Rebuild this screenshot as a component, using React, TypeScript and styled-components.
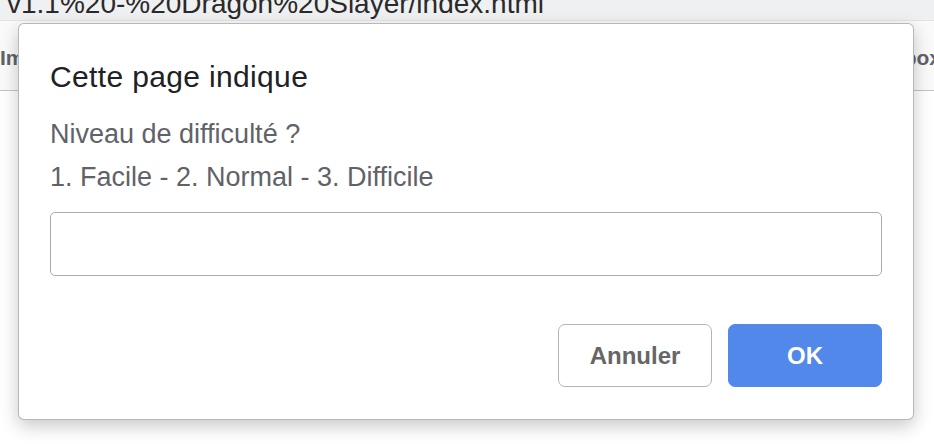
import React from 'react';
import styled, { createGlobalStyle } from 'styled-components';

const GlobalStyle = createGlobalStyle`
	html, body {
		margin: 0;
		padding: 0;
		background: #fff;
	}
	body {
		font-family: 'Liberation Sans', Arial, sans-serif;
	}
`;

const Page = styled.div`
	position: relative;
	width: 934px;
	height: 444px;
	overflow: hidden;
	background: #fff;
`;

const AddressBar = styled.div`
	height: 20px;
	background: #eff0f2;
	overflow: hidden;
	border-bottom: 1px solid #e2e3e5;
`;

const AddressText = styled.div`
	margin-top: -10px;
	padding-left: 7px;
	font-size: 28px;
	line-height: 28px;
	color: #2a2a2a;
	white-space: nowrap;
`;

const Toolbar = styled.div`
	height: 70px;
	display: flex;
	align-items: center;
	justify-content: space-between;
	margin-right: -7px;
	background: #fafafa;
	border-bottom: 1px solid #c4c4c4;
	padding-top: 4px;
	box-sizing: border-box;
`;

const ToolLabel = styled.span`
	font-size: 21px;
	font-weight: bold;
	color: #5f6368;
	white-space: nowrap;
`;

const Dialog = styled.div`
	position: absolute;
	left: 18px;
	top: 23px;
	width: 896px;
	height: 397px;
	box-sizing: border-box;
	background: #fff;
	border: 1px solid rgba(0, 0, 0, 0.28);
	border-radius: 6px;
	box-shadow: 0 6px 18px rgba(0, 0, 0, 0.22);
	padding: 35px 31px 0 31px;
	display: flex;
	flex-direction: column;
`;

const Title = styled.h1`
	margin: 0;
	font-size: 30px;
	line-height: 36px;
	font-weight: normal;
	letter-spacing: 0.35px;
	color: #202124;
`;

const Message = styled.div`
	margin-top: 18px;
	font-size: 27px;
	line-height: 43px;
	color: #5f6368;
`;

const Field = styled.input`
	margin-top: 13px;
	height: 64px;
	width: 100%;
	box-sizing: border-box;
	border: 1px solid #ababab;
	border-radius: 5px;
	outline: none;
	font: inherit;
	font-size: 24px;
	padding: 0 12px;
	background: #fff;
`;

const Actions = styled.div`
	margin-top: 48px;
	display: flex;
	justify-content: flex-end;
	gap: 16px;
`;

const Button = styled.button<{ $primary?: boolean }>`
	width: 154px;
	height: 63px;
	box-sizing: border-box;
	border-radius: 7px;
	font-family: 'Liberation Sans', Arial, sans-serif;
	font-size: 24px;
	font-weight: bold;
	cursor: pointer;
	border: 1px solid ${(p) => (p.$primary ? '#5188ea' : '#b4b4b4')};
	background: ${(p) => (p.$primary ? '#5188ea' : '#fff')};
	color: ${(p) => (p.$primary ? '#fff' : '#666')};
`;

const App = (): JSX.Element => {
	return (
		<Page>
			<GlobalStyle />
			<AddressBar>
				<AddressText>v1.1%20-%20Dragon%20Slayer/index.html</AddressText>
			</AddressBar>
			<Toolbar>
				<ToolLabel>Importer</ToolLabel>
				<ToolLabel>Sandbox</ToolLabel>
			</Toolbar>
			<Dialog>
				<Title>Cette page indique</Title>
				<Message>
					Niveau de difficulté ?
					<br />
					1. Facile - 2. Normal - 3. Difficile
				</Message>
				<Field type="text" />
				<Actions>
					<Button>Annuler</Button>
					<Button $primary>OK</Button>
				</Actions>
			</Dialog>
		</Page>
	);
};

export default App;
